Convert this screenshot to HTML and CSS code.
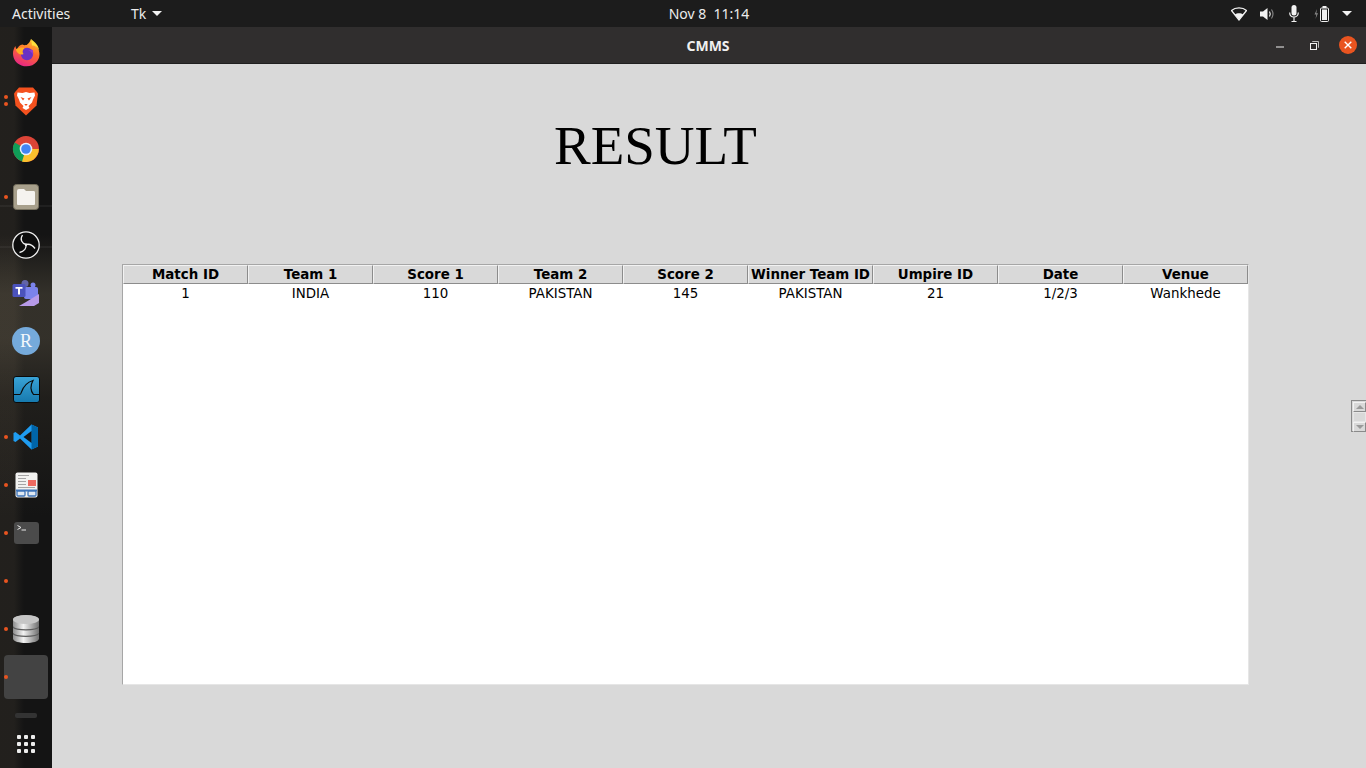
FILE: index.html
```html
<!DOCTYPE html>
<html lang="en">
<head>
<meta charset="utf-8">
<title>CMMS</title>
<link rel="stylesheet" href="styles.css">
</head>
<body>
<header class="topbar">
  <div class="top-left"><span class="activities">Activities</span><span class="appmenu">Tk<i class="caret"></i></span></div>
  <div class="clock">Nov 8&nbsp; 11:14</div>
  <div class="tray">
    <svg class="t-wifi" width="16" height="14" viewBox="0 0 16 14"><path d="M0.500 3.500C4.500 0 11.500 0 15.500 3.500L8 13Z" fill="none" stroke="#f2f2f2" stroke-width="1.300"/><path d="M3.800 7.300C6 5.800 10 5.800 12.200 7.300L8 12.800Z" fill="#f2f2f2"/></svg>
    <svg class="t-vol" width="15" height="14" viewBox="0 0 15 14"><path d="M0 4.500H3L7.500 1V13L3 9.500H0Z" fill="#f2f2f2"/><path d="M9.500 4.500Q11 7 9.500 9.500" fill="none" stroke="#f2f2f2" stroke-width="1.200"/><path d="M11.500 2.500Q14.500 7 11.500 11.500" fill="none" stroke="#888" stroke-width="1.100"/></svg>
    <svg class="t-mic" width="10" height="17" viewBox="0 0 10 17"><rect x="2.500" y="0" width="5" height="10.500" rx="2.500" fill="#f2f2f2"/><path d="M0.700 7.500C0.700 13.500 9.300 13.500 9.300 7.500M5 12V16.500M2.500 16.500H7.500" fill="none" stroke="#f2f2f2" stroke-width="1.200"/></svg>
    <svg class="t-bat" width="16" height="16" viewBox="0 0 16 16"><path d="M3 3L0.500 8.500H2.300L1.500 13L4 7.300H2.300Z" fill="#8a8a8a"/><rect x="6.500" y="2" width="8" height="13.500" rx="1" fill="none" stroke="#f2f2f2" stroke-width="1"/><rect x="8.500" y="0" width="4" height="2" fill="#f2f2f2"/><rect x="8" y="3.500" width="5" height="10.500" fill="#f2f2f2"/></svg>
    <i class="caret"></i>
  </div>
</header>
<div class="desktop">
  <nav class="dock">
    <div class="dock-item">
      <svg width="27" height="28" viewBox="0 0 27 28"><defs><linearGradient id="ff" x1="0.700" y1="0" x2="0.300" y2="1"><stop offset="0" stop-color="#ffc22e"/><stop offset=".45" stop-color="#ff6a2c"/><stop offset="1" stop-color="#e6238a"/></linearGradient></defs><path d="M18 0C18.500 3 22 5 24.500 8.500C27 12.500 27.500 18 24 22.500C20.500 27 14 28.500 8.500 26.500C3 24.500 0 19.500 0 14.500C0 11.500 1 9 2.500 7C2.500 8.500 3 9.500 4 10.500C5 7.500 7 6 9.500 5.500C12 7 15.500 6.500 18 0Z" fill="url(#ff)"/><circle cx="14" cy="15" r="6.200" fill="#6a32c4"/><path d="M15 11.500A5 5 0 0 1 19.500 17L20 11Z" fill="#9a3cd0"/><path d="M2.800 10.500C6 8.500 9 8 11.500 9C9.500 11 9 13 10.500 15C8 16.500 4 15 2.800 10.500Z" fill="#ffae24"/><path d="M18 0C22 3 26 7 26.300 12C25 8 22 6.500 19 6.500Z" fill="#ffdf3c"/></svg>
    </div>
    <div class="dock-item"><i class="dot d-two"></i><i class="dot d-two-b"></i>
      <svg width="24" height="29" viewBox="0 0 24 29"><path d="M5 0.500H19L22.500 4.500L24 6.500L22.500 18.500L12 28.500L1.500 18.500L0 6.500L1.500 4.500Z" fill="#f4511e"/><path d="M12 5L15.500 6L20.500 5.500L21 8.500L19 12.500L18 15.500L14.500 19L15.500 21L12 23L8.500 21L9.500 19L6 15.500L5 12.500L3 8.500L3.500 5.500L8.500 6Z" fill="#fff"/><path d="M6.500 10L10.500 11.500L9 13.500ZM17.500 10L13.500 11.500L15 13.500ZM10.200 17H13.800L12 19Z" fill="#f4511e"/></svg>
    </div>
    <div class="dock-item">
      <svg width="28" height="28" viewBox="0 0 28 28"><circle cx="14" cy="14" r="13" fill="#db4437"/><path d="M14 14L2.700 7.500A13 13 0 0 0 14 27L20.500 14Z" fill="#0f9d58"/><path d="M14 14H26.800A13 13 0 0 1 10 26.400Z" fill="#fbc02d"/><circle cx="14" cy="14" r="6.300" fill="#e8f0fe"/><circle cx="14" cy="14" r="4.800" fill="#4285f4"/></svg>
    </div>
    <div class="dock-item"><i class="dot"></i>
      <svg width="26" height="26" viewBox="0 0 26 26"><rect x="0.500" y="0.500" width="25" height="25" rx="3" fill="#a8a08c" stroke="#77715f"/><path d="M4 7Q4 5 6 5H11L13 7H21Q22 7 22 8.500V20Q22 21 21 21H5Q4 21 4 20Z" fill="#f5f3ef"/></svg>
    </div>
    <div class="dock-item">
      <svg width="28" height="28" viewBox="0 0 28 28"><circle cx="14" cy="14" r="13.200" fill="#0c0c0c" stroke="#efefef" stroke-width="1.300"/><g fill="none" stroke="#efefef" stroke-width="1.300"><path id="blade" d="M14 13.500C10 12.500 7.500 8.500 10.500 4"/><path d="M14 13.500C18 12.500 20.500 14 23 17.500" /><path d="M14 13.500C14.500 17 12.500 20.500 7.500 21.500"/></g><circle cx="14" cy="13.700" r="1.200" fill="#efefef"/></svg>
    </div>
    <div class="dock-item">
      <svg width="28" height="26" viewBox="0 0 28 26"><circle cx="13" cy="3.500" r="3.500" fill="#6264a7"/><circle cx="21" cy="5" r="2.500" fill="#7b83eb"/><rect x="12" y="7" width="14" height="12" rx="2" fill="#7b83eb"/><rect x="0.500" y="4" width="13" height="13" rx="1.500" fill="#4b53bc"/><path d="M3.500 7H10.500V8.700H8V14.500H6V8.700H3.500Z" fill="#fff"/><path d="M7 26L14 22L27 14V23L22 26Z" fill="#b79ae8"/></svg>
    </div>
    <div class="dock-item">
      <svg width="28" height="28" viewBox="0 0 28 28"><circle cx="14" cy="14" r="14" fill="#75aadb"/><text x="14" y="20" class="r-glyph">R</text></svg>
    </div>
    <div class="dock-item">
      <svg width="27" height="27" viewBox="0 0 27 27"><defs><linearGradient id="ws" x1="0" y1="0" x2="0" y2="1"><stop offset="0" stop-color="#3aa4d8"/><stop offset="1" stop-color="#1679ae"/></linearGradient></defs><rect x="0.500" y="0.500" width="26" height="26" rx="2.500" fill="url(#ws)" stroke="#0a0a0a"/><path d="M1 18.500H7C9 18.500 8 8 20 4.500C17.500 9 17 14 20.500 18.500H26" fill="none" stroke="#0a0a0a" stroke-width="1.200"/></svg>
    </div>
    <div class="dock-item"><i class="dot"></i>
      <svg width="26" height="26" viewBox="0 0 26 26"><path d="M18.500 0.500L25 3.500V22.500L18.500 25.500L7 14.500L2.500 18L0.500 17V9L2.500 8L7 11.500Z" fill="#1f9cf0"/><path d="M18.500 0.500L25 3.500V22.500L18.500 25.500Z" fill="#0065a9"/><path d="M18.500 7L10.500 13L18.500 19Z" fill="#141414"/></svg>
    </div>
    <div class="dock-item"><i class="dot"></i>
      <svg width="23" height="26" viewBox="0 0 23 26"><rect x="0.500" y="0.500" width="22" height="25" rx="2" fill="#f2f2f0"/><path d="M3 3.500H14M3 6.500H11M3 9.500H11M3 12.500H11M3 15.500H20" stroke="#a5a5a5" stroke-width="1"/><rect x="13" y="8" width="8" height="6" fill="#ee6a60"/><path d="M1 17.500H22V19.500H1Z" fill="#3f74b8"/><rect x="2" y="19" width="8" height="5" rx="1" fill="#dfe8f2" stroke="#3f74b8" stroke-width="1.300"/><rect x="13" y="19" width="8" height="5" rx="1" fill="#dfe8f2" stroke="#3f74b8" stroke-width="1.300"/></svg>
    </div>
    <div class="dock-item"><i class="dot"></i>
      <svg width="25" height="22" viewBox="0 0 25 22"><rect x="0" y="0" width="25" height="22" rx="3" fill="#4b4b4b"/><path d="M3.500 3.500L7 5.500L3.500 7.500" fill="none" stroke="#e8e8e8" stroke-width="1"/><path d="M7.500 8H12" stroke="#e8e8e8" stroke-width="1"/></svg>
    </div>
    <div class="dock-item"><i class="dot"></i></div>
    <div class="dock-item"><i class="dot"></i>
      <svg width="26" height="28" viewBox="0 0 26 28"><defs><linearGradient id="db" x1="0" y1="0" x2="1" y2="0"><stop offset="0" stop-color="#8c8c8c"/><stop offset=".4" stop-color="#f2f2f2"/><stop offset="1" stop-color="#6e6e6e"/></linearGradient></defs><path d="M0 4.500C0 -1 26 -1 26 4.500V23.500C26 29.500 0 29.500 0 23.500Z" fill="url(#db)"/><ellipse cx="13" cy="4.500" rx="13" ry="4.500" fill="#c6c6c6"/><path d="M0 11.500C0 16 26 16 26 11.500M0 18C0 22.500 26 22.500 26 18" fill="none" stroke="#5c5c5c" stroke-width="1.200"/></svg>
    </div>
    <div class="dock-item"><i class="dot"></i><div class="running-tile"></div></div>
    <div class="dock-sep"></div>
    <div class="apps-grid">
      <i></i><i></i><i></i><i></i><i></i><i></i><i></i><i></i><i></i>
    </div>
  </nav>
  <main class="window">
    <div class="titlebar">
      <span class="wintitle">CMMS</span>
      <div class="winbtns">
        <svg width="8" height="2" viewBox="0 0 8 2" class="b-min"><rect width="8" height="1" y="0.500" fill="#f2f2f2"/></svg>
        <svg width="9" height="9" viewBox="0 0 9 9" class="b-max"><path d="M2.500 1V0.500H8.500V6.500H8" fill="none" stroke="#bbb" stroke-width="1"/><rect x="0.500" y="2.500" width="6" height="6" fill="none" stroke="#f2f2f2" stroke-width="1"/></svg>
        <span class="b-close"><svg width="8" height="8" viewBox="0 0 8 8"><path d="M0.700 0.700L7.300 7.300M7.300 0.700L0.700 7.300" stroke="#fff" stroke-width="1.400"/></svg></span>
      </div>
    </div>
    <div class="content">
      <h1 class="heading">RESULT</h1>
      <div class="table-row">
        <div class="tree">
          <div class="tree-head">
            <span>Match ID</span><span>Team 1</span><span>Score 1</span><span>Team 2</span><span>Score 2</span><span>Winner Team ID</span><span>Umpire ID</span><span>Date</span><span>Venue</span>
          </div>
          <div class="tree-data">
            <span>1</span><span>INDIA</span><span>110</span><span>PAKISTAN</span><span>145</span><span>PAKISTAN</span><span>21</span><span>1/2/3</span><span>Wankhede</span>
          </div>
        </div>
        <div class="scroll">
          <div class="sb-btn"><i class="tri-up"></i></div>
          <div class="sb-btn sb-mid"></div>
          <div class="sb-btn"><i class="tri-down"></i></div>
        </div>
      </div>
    </div>
  </main>
</div>
</body>
</html>
```
FILE: styles.css
```css
* { box-sizing: border-box; }
html, body { margin: 0; height: 100%; overflow: hidden; }
body { width: 1366px; height: 768px; background: #111; display: flex; flex-direction: column; font-family: "Noto Sans", sans-serif; }
i { display: block; font-style: normal; }

.topbar { height: 27px; flex: none; background: #1c1c1c; color: #ececec; display: grid; grid-template-columns: 1fr auto 1fr; align-items: center; font-size: 14px; }
.top-left { display: flex; align-items: center; padding-left: 12px; }
.activities { width: 119px; }
.appmenu { display: flex; align-items: center; gap: 6px; }
.caret { width: 0; height: 0; border-left: 5px solid transparent; border-right: 5px solid transparent; border-top: 5px solid #f2f2f2; }
.clock { text-align: center; transform: translateX(26px); }
.tray { display: flex; justify-content: flex-end; align-items: center; padding-right: 14px; }
.t-wifi { margin-right: 13px; }
.t-vol { margin-right: 14px; }
.t-mic { margin-right: 15px; }
.t-bat { margin-right: 12px; }

.desktop { flex: 1; display: flex; min-height: 0; }
.dock { width: 52px; flex: none; padding-top: 2px; display: flex; flex-direction: column; align-items: stretch;
  background:
    linear-gradient(90deg, rgba(120,105,85,.14) 0 14px, transparent 24px),
    linear-gradient(180deg, transparent 0 28%, rgba(95,88,72,.42) 36% 42%, rgba(60,55,45,.3) 50%, transparent 66%),
    linear-gradient(180deg, transparent 0 24%, rgba(255,255,255,.05) 24% 24.3%, transparent 24.3% 29.500%, rgba(255,255,255,.05) 29.500% 29.800%, transparent 29.800%),
    #141414; }
.dock-item { height: 48px; flex: none; position: relative; display: flex; align-items: center; justify-content: center; }
.dot { position: absolute; left: 4px; top: 22px; width: 4px; height: 4px; border-radius: 50%; background: #e95420; }
.d-two { top: 18px; }
.d-two-b { top: 25px; }
.running-tile { width: 44px; height: 44px; border-radius: 4px; background: #434343; }
.r-glyph { font-family: "Liberation Serif", serif; font-size: 18px; fill: #f4f8fc; text-anchor: middle; }
.dock-sep { width: 22px; height: 5px; margin: 12px auto 0; border-radius: 2px; background: #333; }
.apps-grid { margin: 17px auto 0; display: grid; grid-template-columns: repeat(3, 4px); grid-auto-rows: 4px; gap: 3px; }
.apps-grid i { background: #ececec; border-radius: 1px; }

.window { flex: 1; min-width: 0; display: flex; flex-direction: column; background: #d9d9d9; }
.titlebar { height: 37px; flex: none; position: relative; display: flex; align-items: center; justify-content: center; background: #302e2e; border-bottom: 1px solid #1f1f1f; }
.wintitle { color: #f0f0f0; font-size: 14px; font-weight: 700; transform: translateX(-1px); }
.winbtns { position: absolute; right: 9px; top: 9px; display: flex; align-items: center; }
.b-min { margin-right: 26px; margin-top: 4px; }
.b-max { margin-right: 20px; }
.b-close { width: 18px; height: 18px; border-radius: 50%; background: #e95420; display: flex; align-items: center; justify-content: center; }

.content { flex: 1; display: flex; flex-direction: column; padding-top: 51px; }
.heading { margin: 0; height: 149px; padding-left: 502px; font-family: "Liberation Serif", serif; font-size: 55px; font-weight: 400; line-height: 62px; color: #000; }
.table-row { display: flex; justify-content: space-between; align-items: flex-start; padding-left: 70px; }
.tree { width: 1127px; height: 421px; background: #fff; border: 1px solid #a6a6a6; border-bottom-color: #e6e6e6; border-right-color: #e6e6e6; font-family: "DejaVu Sans", sans-serif; color: #000; font-size: 13.4px; }
.tree-head, .tree-data { display: grid; grid-template-columns: repeat(9, 125px); }
.tree-head { height: 19px; font-weight: 700; }
.tree-head span { height: 19px; line-height: 18px; text-align: center; white-space: nowrap; overflow: hidden; background: #d9d9d9; border: 1px solid #8c8c8c; border-top-color: #f2f2f2; border-left-color: #f2f2f2; }
.tree-data { height: 20px; padding-top: 1px; }
.tree-data span { line-height: 18px; text-align: center; }
.scroll { width: 15px; margin-top: 136px; height: 32px; border: 1px solid #8a8a8a; border-right: 0; background: #d9d9d9; display: flex; flex-direction: column; padding: 1px 0 0 1px; }
.sb-btn { height: 10px; flex: none; display: flex; align-items: center; justify-content: center; background: #d9d9d9; border: 1px solid #f2f2f2; border-right-color: #8a8a8a; border-bottom-color: #8a8a8a; }
.sb-mid { border-color: #e6e6e6; }
.tri-up { width: 0; height: 0; border-left: 4px solid transparent; border-right: 4px solid transparent; border-bottom: 4px solid #9a9a9a; }
.tri-down { width: 0; height: 0; border-left: 4px solid transparent; border-right: 4px solid transparent; border-top: 4px solid #9a9a9a; }
```
